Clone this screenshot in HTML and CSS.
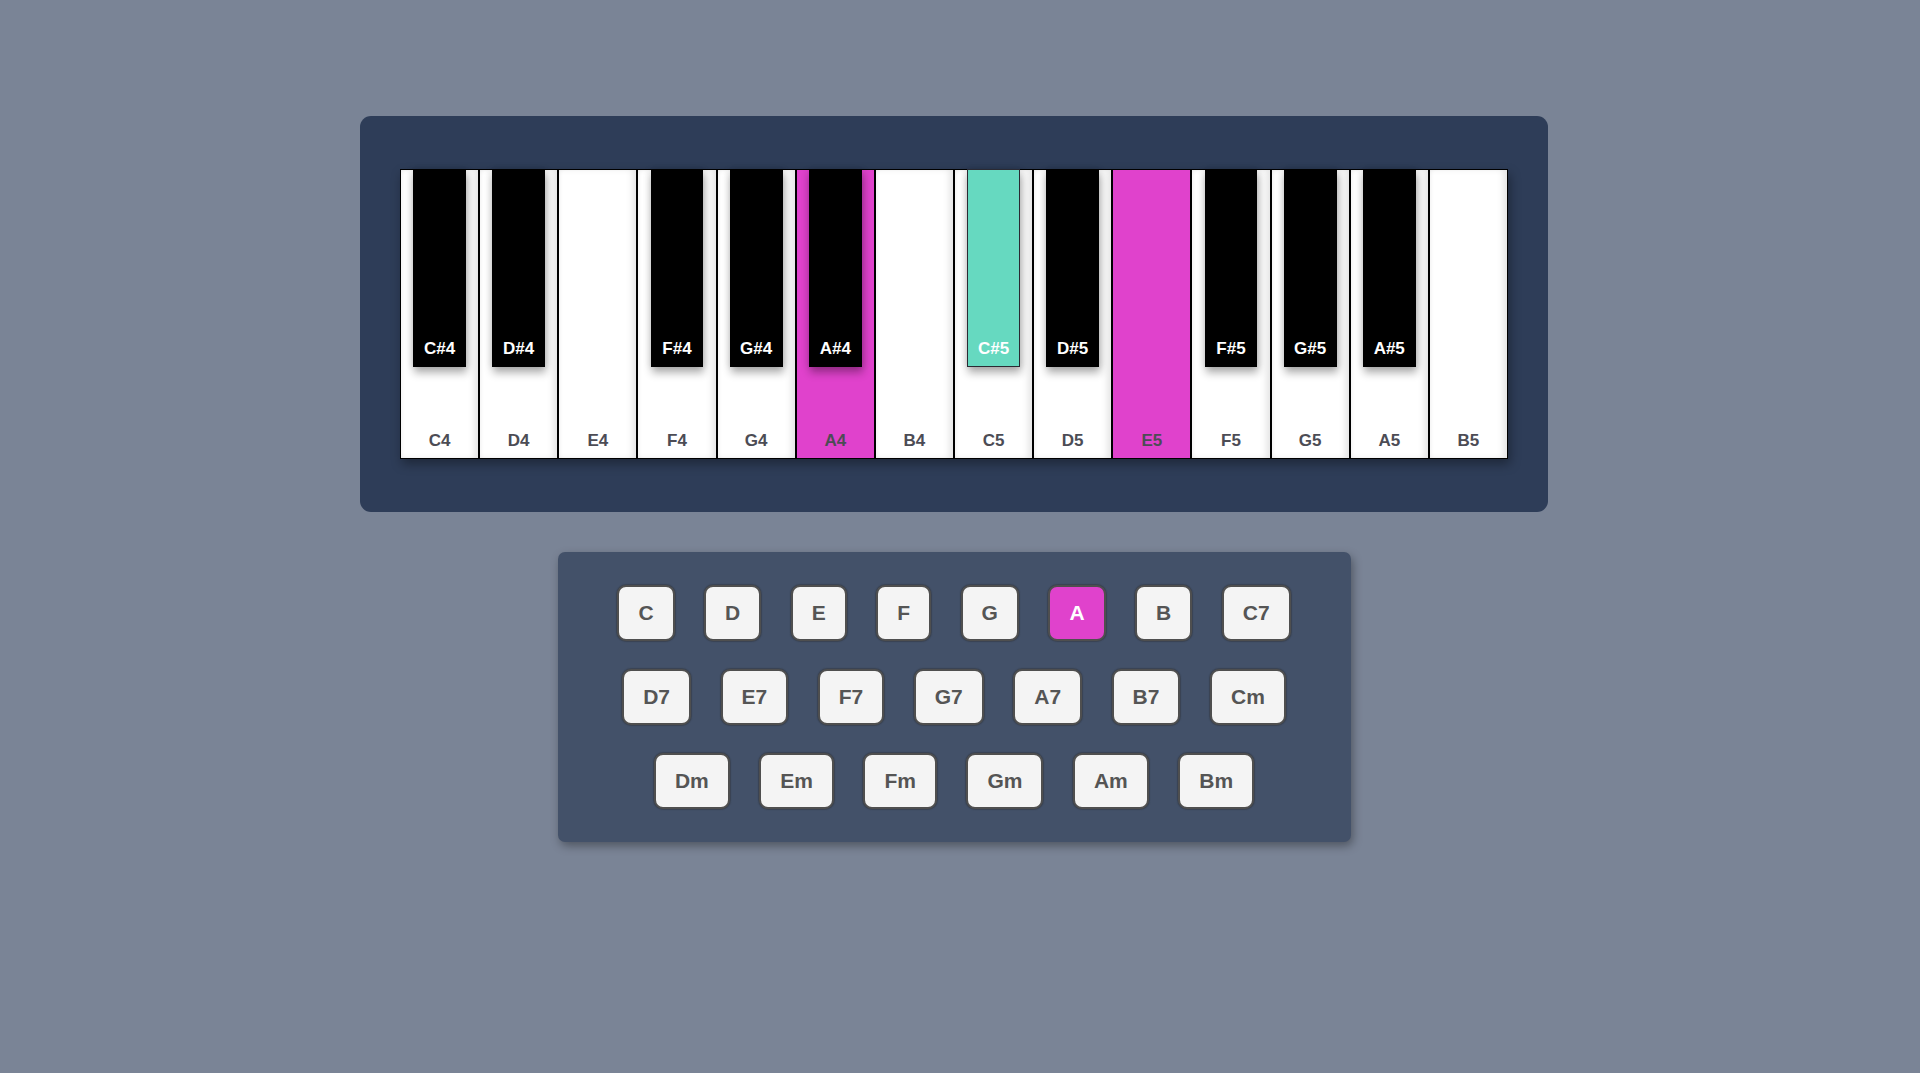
FILE: index.html
```html
<!DOCTYPE html>
<html lang="en">
<head>
<meta charset="utf-8">
<title>Piano Chords</title>
<link rel="stylesheet" href="styles.css">
</head>
<body>
<main class="page">
  <section class="piano-panel">
    <div class="keyboard">
      <div class="white-key"><div class="black-key"><span>C#4</span></div><span class="wlabel">C4</span></div>
      <div class="white-key"><div class="black-key"><span>D#4</span></div><span class="wlabel">D4</span></div>
      <div class="white-key"><span class="wlabel">E4</span></div>
      <div class="white-key"><div class="black-key"><span>F#4</span></div><span class="wlabel">F4</span></div>
      <div class="white-key"><div class="black-key"><span>G#4</span></div><span class="wlabel">G4</span></div>
      <div class="white-key pressed"><div class="black-key"><span>A#4</span></div><span class="wlabel">A4</span></div>
      <div class="white-key"><span class="wlabel">B4</span></div>
      <div class="white-key"><div class="black-key teal"><span>C#5</span></div><span class="wlabel">C5</span></div>
      <div class="white-key"><div class="black-key"><span>D#5</span></div><span class="wlabel">D5</span></div>
      <div class="white-key pressed"><span class="wlabel">E5</span></div>
      <div class="white-key"><div class="black-key"><span>F#5</span></div><span class="wlabel">F5</span></div>
      <div class="white-key"><div class="black-key"><span>G#5</span></div><span class="wlabel">G5</span></div>
      <div class="white-key"><div class="black-key"><span>A#5</span></div><span class="wlabel">A5</span></div>
      <div class="white-key"><span class="wlabel">B5</span></div>
    </div>
  </section>

  <section class="chord-panel">
    <div class="chord-row">
      <button class="chord">C</button>
      <button class="chord">D</button>
      <button class="chord">E</button>
      <button class="chord">F</button>
      <button class="chord">G</button>
      <button class="chord active">A</button>
      <button class="chord">B</button>
      <button class="chord">C7</button>
    </div>
    <div class="chord-row">
      <button class="chord">D7</button>
      <button class="chord">E7</button>
      <button class="chord">F7</button>
      <button class="chord">G7</button>
      <button class="chord">A7</button>
      <button class="chord">B7</button>
      <button class="chord">Cm</button>
    </div>
    <div class="chord-row">
      <button class="chord">Dm</button>
      <button class="chord">Em</button>
      <button class="chord">Fm</button>
      <button class="chord">Gm</button>
      <button class="chord">Am</button>
      <button class="chord">Bm</button>
    </div>
  </section>
</main>
</body>
</html>
```

FILE: styles.css
```css
* {
  box-sizing: border-box;
}

html, body {
  margin: 0;
  padding: 0;
}

body {
  background: #7a8496;
  font-family: "Liberation Sans", Arial, Helvetica, sans-serif;
  min-height: 1073px;
}

.page {
  display: flex;
  flex-direction: column;
  align-items: center;
  padding: 116px 12px 0 0;
  gap: 40px;
}

.piano-panel {
  width: 1188px;
  background: #2e3d58;
  border-radius: 11px;
  padding: 53px 40px;
}

.keyboard {
  display: flex;
  width: 1108px;
  height: 290px;
  box-shadow: 2px 5px 10px rgba(0, 0, 0, 0.35);
}

.white-key {
  position: relative;
  flex: 1 1 0;
  background: #ffffff;
  border: 1px solid #000;
  box-shadow: inset -5px 0 6px -1px rgba(0, 0, 0, 0.1), inset 3px 0 4px -2px rgba(0, 0, 0, 0.06);
  display: flex;
  flex-direction: column;
  justify-content: flex-end;
  align-items: center;
}

.white-key.pressed {
  background: #e042cc;
  box-shadow: none;
}

.wlabel {
  font-size: 17px;
  line-height: 20px;
  font-weight: bold;
  color: #4c4c55;
  padding-bottom: 7px;
}

.black-key {
  position: absolute;
  top: -1px;
  left: calc(50% - 26.4px);
  width: 52.8px;
  height: 198px;
  background: #000;
  border: 1px solid #000;
  z-index: 2;
  box-shadow: 1px 6px 8px rgba(0, 0, 0, 0.3), 3px 0 6px rgba(0, 0, 0, 0.08), -3px 0 6px rgba(0, 0, 0, 0.06);
  display: flex;
  justify-content: center;
  align-items: flex-end;
}

.black-key span {
  color: #fff;
  font-size: 17px;
  line-height: 20px;
  font-weight: bold;
  padding-bottom: 7px;
}

.black-key.teal {
  background: #66d9c0;
  border: 1px solid #2a2a33;
}

.chord-panel {
  width: 793px;
  background: #435169;
  border-radius: 7px;
  padding: 33px 20px 33px;
  box-shadow: 2px 4px 10px rgba(0, 0, 0, 0.35);
  display: flex;
  flex-direction: column;
  gap: 28px;
}

.chord-row {
  display: flex;
  justify-content: center;
  gap: 29.5px;
}

.chord {
  font-family: "Liberation Sans", Arial, Helvetica, sans-serif;
  font-size: 21px;
  font-weight: bold;
  line-height: 24px;
  color: #555;
  background: #f4f4f4;
  border: 2px solid #4f4f4f;
  border-radius: 9px;
  padding: 14px 19px;
  height: 56px;
  margin: 0;
  cursor: pointer;
  box-shadow: 0 0 1px 1px rgba(40, 40, 40, 0.35);
}

.chord.active {
  background: #e042cc;
  color: #fff;
}
```
